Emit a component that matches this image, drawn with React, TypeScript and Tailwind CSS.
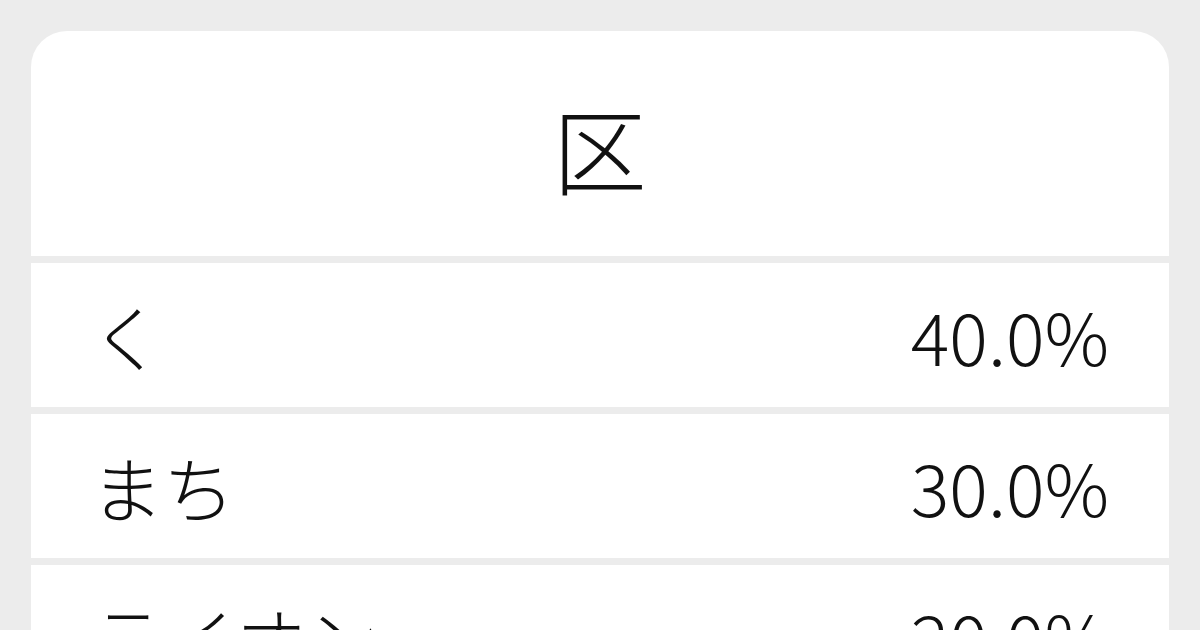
const rows = [
  { reading: 'く', share: '40.0%' },
  { reading: 'まち', share: '30.0%' },
  { reading: 'ライオン', share: '20.0%' },
];

const font = { fontFamily: '"Noto Sans CJK JP", "Noto Sans", sans-serif' };

export default function App() {
  return (
    <div className="w-[1200px] h-[630px] overflow-hidden bg-[#ececec] pt-[31px] px-[31px]" style={font}>
      <div className="bg-[#ececec] rounded-t-[36px] overflow-hidden flex flex-col gap-[6.7px]">
        {/* Kanji header */}
        <div className="h-[225px] bg-white flex items-center justify-center">
          <span className="text-[94px] leading-none font-light text-[#111] pt-[6px]">区</span>
        </div>

        {/* Readings */}
        {rows.map((row) => (
          <div
            key={row.reading}
            className="h-[144.3px] shrink-0 bg-white flex items-center justify-between pl-[60px] pr-[60px] text-[72px] font-light text-[#111] leading-none"
          >
            <span>{row.reading}</span>
            <span>{row.share}</span>
          </div>
        ))}
      </div>
    </div>
  );
}
